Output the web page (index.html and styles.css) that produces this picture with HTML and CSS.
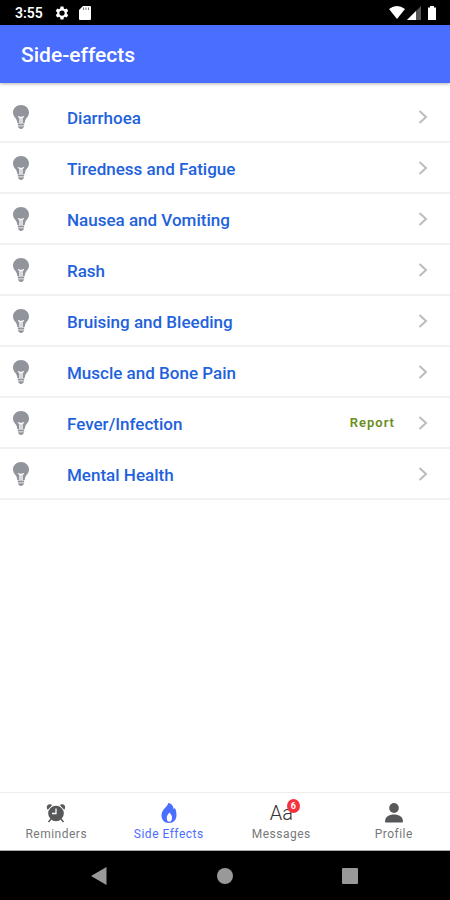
FILE: index.html
```html
<!DOCTYPE html>
<html lang="en">
<head>
<meta charset="utf-8">
<meta name="viewport" content="width=device-width, initial-scale=1">
<title>Side-effects</title>
<link rel="stylesheet" href="styles.css">
</head>
<body>
<svg class="defs" aria-hidden="true">
  <symbol id="bulb" viewBox="0 0 16 24">
    <path fill="#92949c" d="M8 0C3.500 0 0 3.300 0 7.500c0 3 1.700 4.600 3 6.300.8 1.100 1.200 2.500 1.300 4.200h7.400c.1-1.700.5-3.100 1.300-4.200 1.300-1.700 3-3.300 3-6.300C16 3.300 12.500 0 8 0z"/>
    <path fill="none" stroke="#fff" stroke-width="1.300" d="M5 11.500 7 12.500v5.500M11 11.500 9 12.500v5.500M7 12.500h2"/>
    <path fill="#92949c" d="M4.800 18.500h6.400v2H4.800zM5 21.200h6C10.500 23 9.500 24 8 24s-2.500-1-3-2.800z"/>
  </symbol>
  <symbol id="chevron" viewBox="0 0 10 14">
    <path fill="none" stroke="#bcbcbe" stroke-width="2" d="M1.500 1 8 7l-6.500 6"/>
  </symbol>
</svg>
<div class="screen">
  <div class="status">
    <span class="time">3:55</span>
    <svg class="gear" viewBox="0 0 24 24" aria-hidden="true"><path fill="#fff" fill-rule="evenodd" d="M9.500 1h5l.6 3.200 2 1.200 3.100-1.100 2.500 4.300-2.500 2.100v2.600l2.500 2.100-2.500 4.300-3.100-1.100-2 1.200-.6 3.200h-5l-.6-3.200-2-1.200-3.100 1.100-2.500-4.300 2.500-2.100v-2.600L1.300 8.600l2.500-4.300 3.100 1.100 2-1.200zM12 7.500a4.500 4.500 0 1 0 0 9 4.500 4.500 0 0 0 0-9z"/></svg>
    <svg class="card" viewBox="0 0 12 14" aria-hidden="true"><path fill="#fff" d="M4 0h7q1 0 1 1v12q0 1-1 1H1q-1 0-1-1V4z"/><path stroke="#777" stroke-width="1" d="M4.500 1.500v2.500M7 1.500v2.500M9.500 1.500v2.500"/></svg>
    <svg class="wifi" viewBox="0 0 16 13" aria-hidden="true"><path fill="#fff" d="M0 3Q8-3 16 3L8 13z"/></svg>
    <svg class="signal" viewBox="0 0 14 14" aria-hidden="true"><path fill="#555" d="M14 0v14H0z"/><path fill="#fff" d="M9 5v9H0z"/></svg>
    <svg class="battery" viewBox="0 0 8 14" aria-hidden="true"><path fill="#fff" d="M2 0h4v1.500h2V14H0V1.500h2z"/></svg>
  </div>
  <header class="header"><h1>Side-effects</h1></header>
  <main class="content">
    <ul class="list">
      <li><a class="row" href="#"><svg class="bulb"><use href="#bulb"/></svg><span class="label">Diarrhoea</span><svg class="chevron"><use href="#chevron"/></svg></a></li>
      <li><a class="row" href="#"><svg class="bulb"><use href="#bulb"/></svg><span class="label">Tiredness and Fatigue</span><svg class="chevron"><use href="#chevron"/></svg></a></li>
      <li><a class="row" href="#"><svg class="bulb"><use href="#bulb"/></svg><span class="label">Nausea and Vomiting</span><svg class="chevron"><use href="#chevron"/></svg></a></li>
      <li><a class="row" href="#"><svg class="bulb"><use href="#bulb"/></svg><span class="label">Rash</span><svg class="chevron"><use href="#chevron"/></svg></a></li>
      <li><a class="row" href="#"><svg class="bulb"><use href="#bulb"/></svg><span class="label">Bruising and Bleeding</span><svg class="chevron"><use href="#chevron"/></svg></a></li>
      <li><a class="row" href="#"><svg class="bulb"><use href="#bulb"/></svg><span class="label">Muscle and Bone Pain</span><svg class="chevron"><use href="#chevron"/></svg></a></li>
      <li><a class="row" href="#"><svg class="bulb"><use href="#bulb"/></svg><span class="label">Fever/Infection</span><span class="report">Report</span><svg class="chevron"><use href="#chevron"/></svg></a></li>
      <li><a class="row" href="#"><svg class="bulb"><use href="#bulb"/></svg><span class="label">Mental Health</span><svg class="chevron"><use href="#chevron"/></svg></a></li>
    </ul>
  </main>
  <nav class="tabs">
    <a class="tab" href="#">
      <svg class="icon" viewBox="0 0 20 20" aria-hidden="true"><circle cx="10" cy="10.500" r="7.800" fill="#57585a"/><path fill="#57585a" d="M1.800 6.800C0 4.500.8 1.500 3.500 1.200c1.200 0 2 .4 2.600 1zM18.200 6.800c1.800-2.300 1-5.300-1.700-5.600-1.200 0-2 .4-2.600 1z"/><path stroke="#57585a" stroke-width="1.500" d="m5 16-2.500 3M15 16l2.500 3"/><path fill="none" stroke="#fff" stroke-width="1.300" d="M10 5.500v5H6"/></svg>
      <span>Reminders</span>
    </a>
    <a class="tab active" href="#" aria-current="page">
      <svg class="icon" viewBox="0 0 20 20" aria-hidden="true"><path fill="#4a6eff" fill-rule="evenodd" d="M9 0c4 .5 5.500 3.500 5.500 6 1-.3 1.200-.8 1.300-1.300C17 7 17.500 9.500 17.500 12c0 5-3 8-7.500 8s-7.500-3-7.500-7.500c0-3 1.200-5 3-7C7.500 3.500 9 2.300 9 0zM10.500 9.500C9 11 7.800 12.500 7.800 15s.9 3.800 2.400 3.800S13 17.500 13 15s-1-4-2.500-5.500z"/></svg>
      <span>Side Effects</span>
    </a>
    <a class="tab" href="#">
      <span class="letters">Aa<span class="badge">6</span></span>
      <span>Messages</span>
    </a>
    <a class="tab" href="#">
      <svg class="icon" viewBox="0 0 20 20" aria-hidden="true"><ellipse cx="10" cy="5" rx="4.800" ry="5" fill="#57585a"/><path fill="#57585a" d="M1 18.500C1 14 5 11.500 10 11.500s9 2.500 9 7q0 1-1 1H2q-1 0-1-1z"/></svg>
      <span>Profile</span>
    </a>
  </nav>
  <div class="system">
    <button type="button" aria-label="Back"><svg viewBox="0 0 18 18"><path fill="#999" d="M0 9 15.500 0v18z"/></svg></button>
    <button type="button" aria-label="Home"><svg viewBox="0 0 18 18"><circle cx="9" cy="9" r="8" fill="#999"/></svg></button>
    <button type="button" aria-label="Recent apps"><svg viewBox="0 0 18 18"><rect x="1" y="1" width="16" height="16" rx="1" fill="#999"/></svg></button>
  </div>
</div>
</body>
</html>
```
FILE: styles.css
```css
* { box-sizing: border-box; }

body {
  margin: 0;
  background: #fff;
  font-family: Roboto, "Liberation Sans", sans-serif;
}

a { text-decoration: none; }

svg { display: block; flex: none; }

.defs { display: none; }

.screen {
  display: flex;
  flex-direction: column;
  min-height: 100vh;
}

.status {
  display: flex;
  align-items: center;
  height: 25px;
  padding: 0 14px 0 15px;
  background: #000;
  color: #fff;
}

.time { font-size: 14px; font-weight: 600; line-height: 24px; }
.gear { width: 14px; height: 14px; margin-left: 12px; }
.card { width: 12px; height: 14px; margin-left: 10px; }
.wifi { width: 16px; height: 13px; margin-left: auto; }
.signal { width: 14px; height: 14px; margin-left: 2px; }
.battery { width: 8px; height: 14px; margin-left: 7px; }

.header {
  display: flex;
  align-items: center;
  height: 58px;
  padding: 2px 21px 0;
  background: #4a6eff;
  color: #fff;
  box-shadow: 0 1px 3px rgba(0, 0, 0, 0.3);
}

.header h1 {
  margin: 0;
  font-size: 21px;
  font-weight: 500;
  line-height: 28px;
}

.content { flex: 1; padding-top: 9px; }

.list { margin: 0; padding: 0; list-style: none; }

.row {
  display: flex;
  align-items: center;
  height: 51px;
  padding: 0 22px 0 13px;
  border-bottom: 2px solid #f1f1f1;
}

.bulb { width: 16px; height: 24px; }

.label {
  flex: 1;
  margin-left: 38px;
  padding-top: 2px;
  color: #1e62dc;
  font-size: 17px;
  font-weight: 500;
  line-height: 24px;
}

.report {
  margin-right: 23px;
  color: #6b8e23;
  font-size: 13px;
  font-weight: 600;
  line-height: 20px;
  letter-spacing: 1px;
}

.chevron { width: 10px; height: 14px; }

.tabs {
  display: grid;
  grid-template-columns: repeat(4, 1fr);
  height: 59px;
  border-top: 1px solid #ededed;
  border-bottom: 1px solid #aaa;
}

.tab {
  display: flex;
  flex-direction: column;
  align-items: center;
  gap: 3px;
  padding-top: 10px;
  color: #77787a;
  font-size: 12px;
  line-height: 16px;
  letter-spacing: 0.5px;
}

.active { color: #4a6eff; }

.icon { width: 20px; height: 20px; }

.letters {
  position: relative;
  height: 20px;
  color: #333;
  font-size: 20px;
  font-weight: 300;
  line-height: 20px;
  letter-spacing: 0;
}

.badge {
  position: absolute;
  top: -4px;
  right: -7px;
  width: 13px;
  height: 14px;
  border-radius: 50%;
  background: #f5333f;
  color: #fff;
  font-size: 9px;
  font-weight: 700;
  line-height: 14px;
  text-align: center;
}

.system {
  display: flex;
  align-items: center;
  justify-content: space-evenly;
  gap: 16px;
  height: 49px;
  background: #000;
}

.system button {
  width: 18px;
  height: 18px;
  padding: 0;
  border: 0;
  background: none;
}
```
